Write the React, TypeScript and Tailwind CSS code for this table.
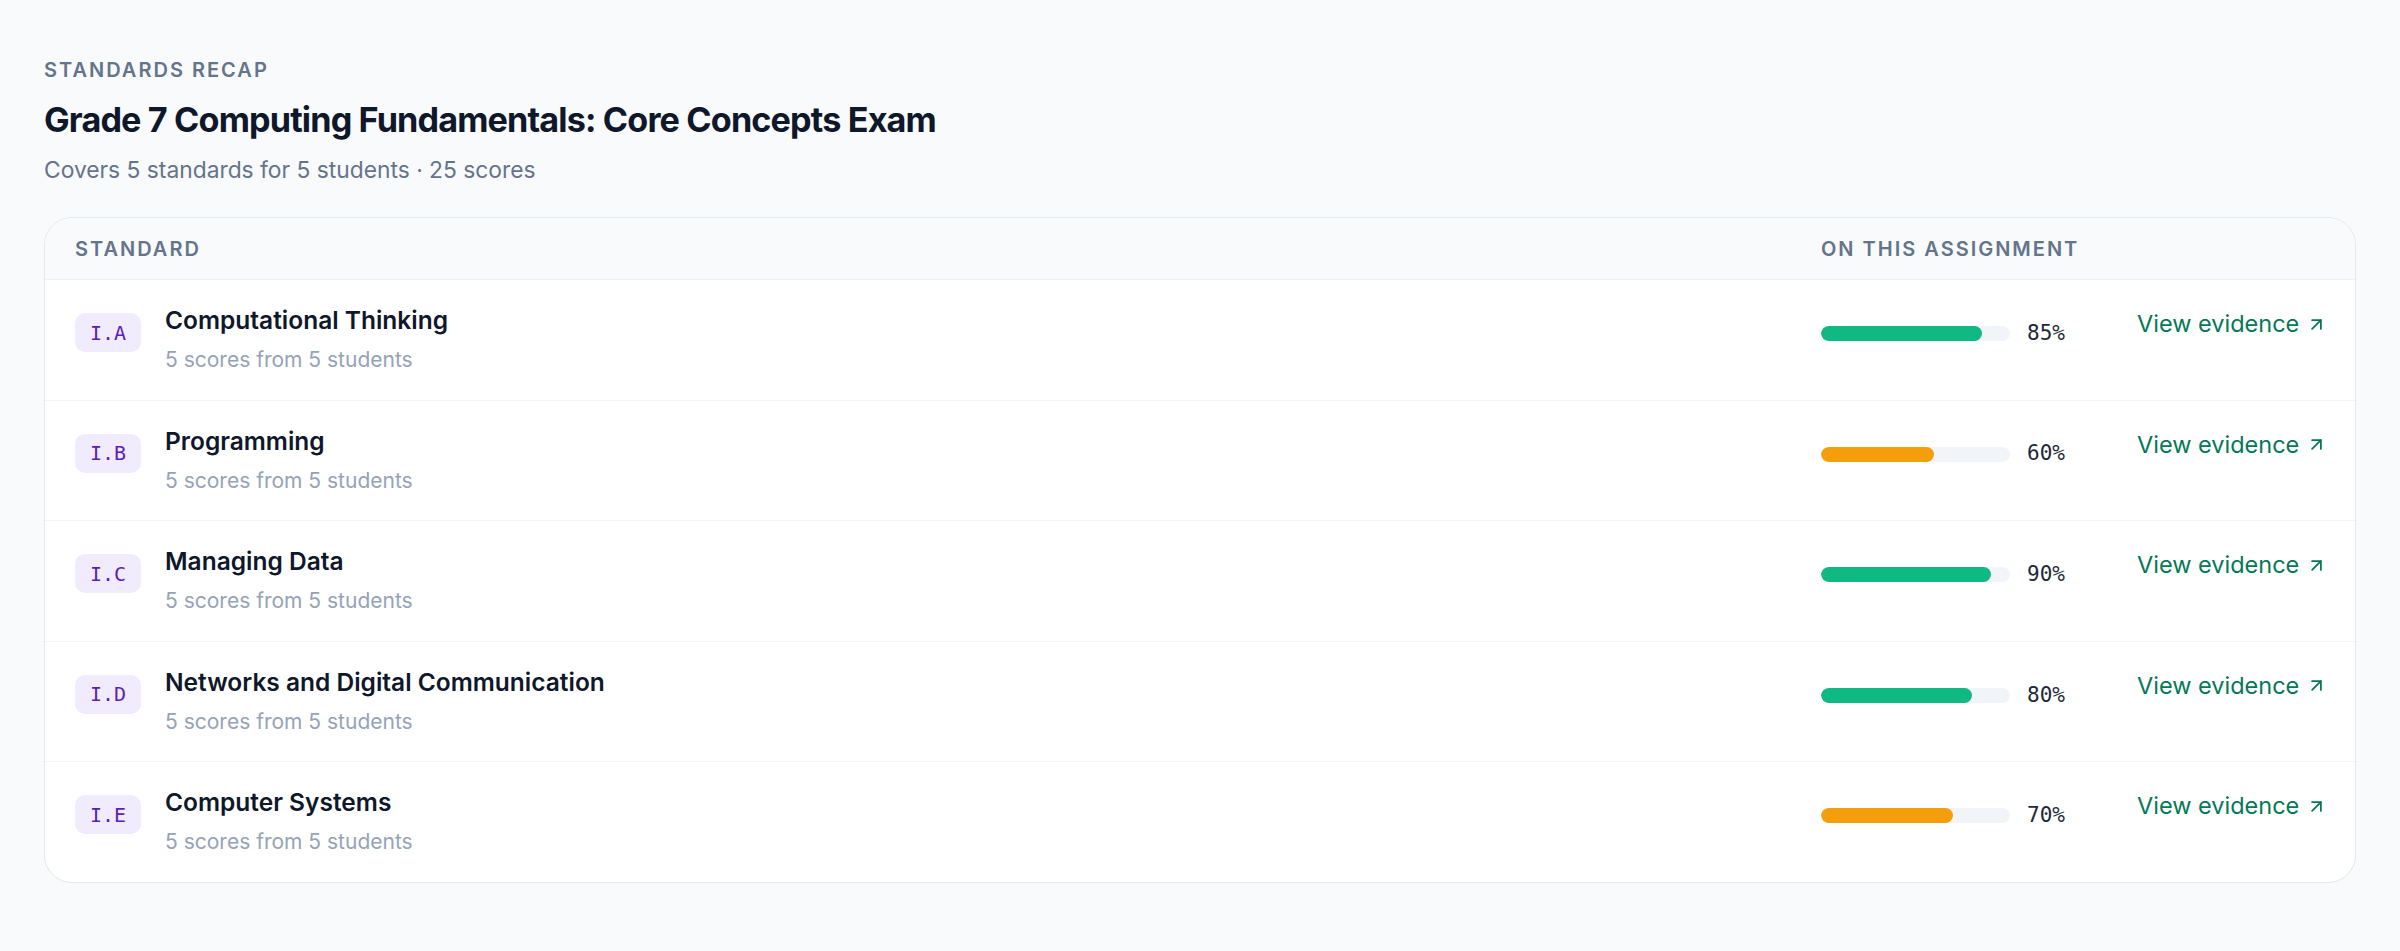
import React from "react";
import { ArrowUpRight } from "lucide-react";

type Row = { code: string; name: string; pct: number; color: string };

const rows: Row[] = [
  { code: "I.A", name: "Computational Thinking", pct: 85, color: "bg-[#10b981]" },
  { code: "I.B", name: "Programming", pct: 60, color: "bg-[#f59e0b]" },
  { code: "I.C", name: "Managing Data", pct: 90, color: "bg-[#10b981]" },
  { code: "I.D", name: "Networks and Digital Communication", pct: 80, color: "bg-[#10b981]" },
  { code: "I.E", name: "Computer Systems", pct: 70, color: "bg-[#f59e0b]" },
];

const mono = { fontFamily: '"DejaVu Sans Mono", "Liberation Mono", monospace' };

export default function App() {
  return (
    <div
      className="min-h-screen bg-[#f8fafc] px-[44px] pt-[56px] pb-[60px]"
      style={{ fontFamily: 'Inter, "Noto Sans", sans-serif' }}
    >
      <p className="text-[20px] leading-[28px] font-semibold uppercase tracking-[0.1em] text-[#64748b]">
        Standards recap
      </p>
      <h1 className="mt-[15px] text-[34.2px] leading-[42px] font-bold tracking-[-0.025em] text-[#0f172a]">
        Grade 7 Computing Fundamentals: Core Concepts Exam
      </h1>
      <p className="mt-[13px] text-[22.8px] leading-[31px] text-[#64748b]">
        Covers 5 standards for 5 students · 25 scores
      </p>

      <div className="mt-[32px] overflow-hidden rounded-[28px] border border-[#e2e8f0] bg-white">
        <div className="flex h-[62px] items-center border-b border-[#eef2f6] bg-[#f8fafc] px-[30px] text-[20px] font-semibold uppercase tracking-[0.1em] text-[#64748b]">
          <div className="flex-1">Standard</div>
          <div className="w-[316px] flex-none">On this assignment</div>
          <div className="w-[188px] flex-none" />
        </div>
        {rows.map((r, i) => (
          <div
            key={r.code}
            className={`flex items-start px-[30px] pt-[24px] pb-[24.6px] ${
              i < rows.length - 1 ? "border-b border-[#f1f5f9]" : ""
            }`}
          >
            <div className="flex min-w-0 flex-1 items-start gap-[24px]">
              <div
                className="mt-[9px] flex h-[39px] w-[66px] flex-none items-center justify-center rounded-[10px] bg-[#f1ebfe] text-[20px] font-medium text-[#5b21b6]"
                style={mono}
              >
                {r.code}
              </div>
              <div>
                <div className="text-[24.5px] leading-[32px] font-semibold text-[#0f172a]">{r.name}</div>
                <div className="mt-[9px] text-[21px] leading-[30px] text-[#94a3b8]">5 scores from 5 students</div>
              </div>
            </div>
            <div className="mt-[10px] flex h-[39px] w-[316px] flex-none items-center gap-[17px]">
              <div className="h-[15px] w-[189px] overflow-hidden rounded-full bg-[#f1f5f9]">
                <div className={`h-full rounded-full ${r.color}`} style={{ width: `${r.pct}%` }} />
              </div>
              <span className="text-[21px] text-[#1e293b]" style={mono}>
                {r.pct}%
              </span>
            </div>
            <div className="mt-[4px] flex w-[188px] flex-none items-center gap-[7px] whitespace-nowrap text-[23.5px] leading-[32px] text-[#047857]">
              <span>View evidence</span>
              <ArrowUpRight size={21} strokeWidth={2} className="flex-none" />
            </div>
          </div>
        ))}
      </div>
    </div>
  );
}
